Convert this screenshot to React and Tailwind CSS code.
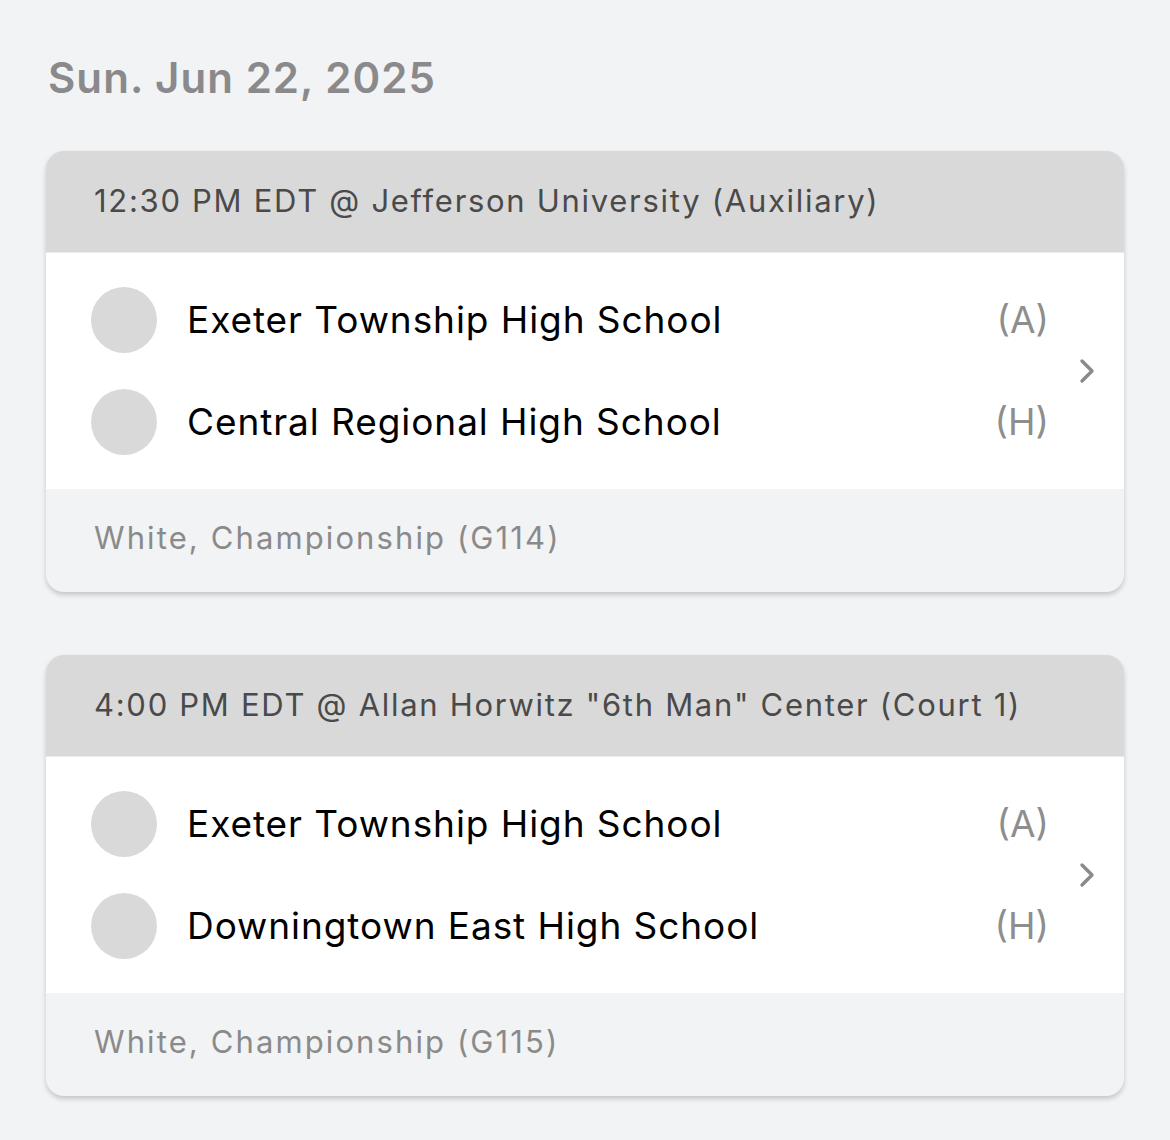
import React from 'react';

const games = [
  {
    header: '12:30 PM EDT @ Jefferson University (Auxiliary)',
    teams: [
      { name: 'Exeter Township High School', side: '(A)' },
      { name: 'Central Regional High School', side: '(H)' },
    ],
    footer: 'White, Championship (G114)',
  },
  {
    header: '4:00 PM EDT @ Allan Horwitz "6th Man" Center (Court 1)',
    teams: [
      { name: 'Exeter Township High School', side: '(A)' },
      { name: 'Downingtown East High School', side: '(H)' },
    ],
    footer: 'White, Championship (G115)',
  },
];

const Chevron = () => (
  <svg width="22" height="30" viewBox="0 0 22 30" fill="none">
    <path d="M6 5l10 10-10 10" stroke="#8a8a8a" strokeWidth="3.4" strokeLinecap="round" strokeLinejoin="round" />
  </svg>
);

const GameCard = ({ game }) => (
  <div className="bg-[#f2f3f5] rounded-[18px] shadow-[0_3px_5px_rgba(0,0,0,0.18)] overflow-hidden">
    <div className="bg-[#d9d9d9] h-[102px] flex items-center pl-[48px] text-[31px] tracking-[0.055em] text-[#4a4a4a] border-b border-[#ececec]">
      {game.header}
    </div>
    <div className="bg-white h-[236px] flex items-center pl-[45px] pr-[26px]">
      <div className="flex-1 flex flex-col gap-[36px]">
        {game.teams.map((t) => (
          <div key={t.name + t.side} className="flex items-center h-[66px]">
            <div className="w-[66px] h-[66px] rounded-full bg-[#d9d9d9]" />
            <div className="ml-[30px] flex-1 text-[37px] tracking-[0.025em] text-black">{t.name}</div>
            <div className="text-[37px] text-[#8e8e8e] mr-[27px]">{t.side}</div>
          </div>
        ))}
      </div>
      <Chevron />
    </div>
    <div className="h-[103px] flex items-center pl-[48px] pb-[4px] text-[31px] tracking-[0.068em] text-[#8a8a8a]">
      {game.footer}
    </div>
  </div>
);

export default function App() {
  return (
    <div className="min-h-[1140px] w-[1170px] bg-[#f2f3f5] px-[46px] pt-[57px] font-['Inter',sans-serif]">
      <h1 className="text-[42px] font-semibold tracking-[0.025em] text-[#8a898c] ml-[2px] leading-none">Sun. Jun 22, 2025</h1>
      <div className="mt-[52px] flex flex-col gap-[63px]">
        {games.map((g) => (
          <GameCard key={g.footer} game={g} />
        ))}
      </div>
    </div>
  );
}
